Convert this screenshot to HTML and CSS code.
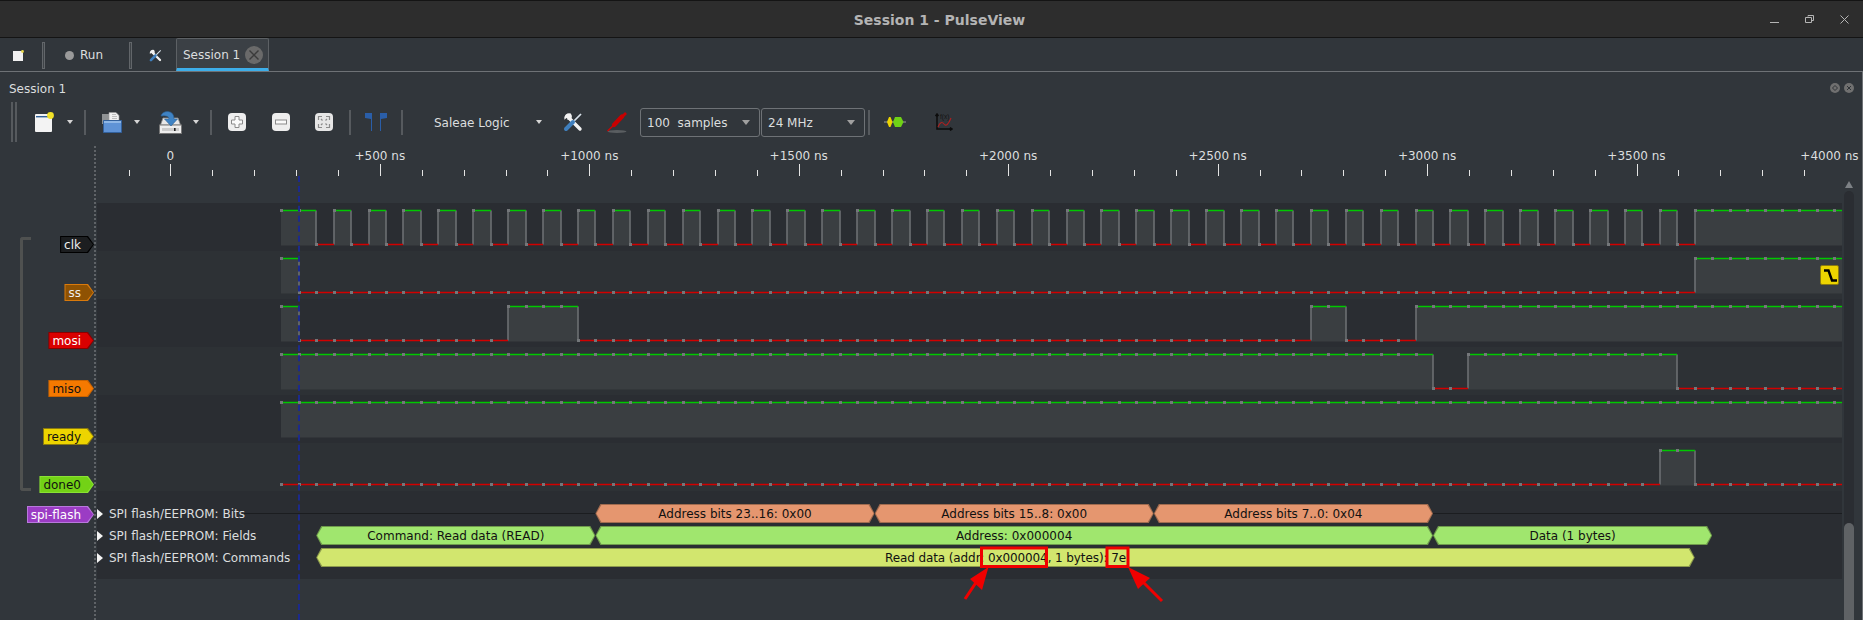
FILE: index.html
```html
<!DOCTYPE html>
<html lang="en">
<head>
  <meta charset="UTF-8">
  <title>Session 1 - PulseView</title>
  <link rel="stylesheet" href="styles.css">
</head>
<body>
  <svg class="defs" width="0" height="0">
    <symbol id="tools" viewBox="0 0 20 20">
      <path d="M4 4 L17 17" stroke="#f2f2f2" stroke-width="3.4" stroke-linecap="round"/>
      <path d="M7.8 1.6 A5 5 0 0 0 1.4 7.8 L4 5.4 L5.8 6 L6.4 3.8 Z M4 7.6 A5 5 0 0 0 8.6 6.2 A5 5 0 0 0 7.8 1.6 L5 4.4 L5.6 6 Z" fill="#f2f2f2"/>
      <path d="M18 2 L9.5 10.5" stroke="#d9e3ec" stroke-width="1.7"/>
      <path d="M10 10 L3 17" stroke="#3f7fbd" stroke-width="4" stroke-linecap="round"/>
    </symbol>
  </svg>

  <header class="titlebar">
    <span class="window-title">Session 1 - PulseView</span>
    <div class="window-buttons">
      <svg width="9" height="8" viewBox="0 0 9 8"><path d="M0 7.5 H9" stroke="#b5b5b5"/></svg>
      <svg width="9" height="8" viewBox="0 0 9 8"><path d="M3 1.5 V0.5 H8.5 V5.5 H6.5 M0.5 2.5 H6.5 V7.5 H0.5 Z" stroke="#b5b5b5" fill="none"/></svg>
      <svg width="9" height="9" viewBox="0 0 9 9"><path d="M0.5 0.5 L8.5 8.5 M8.5 0.5 L0.5 8.5" stroke="#b5b5b5"/></svg>
    </div>
  </header>

  <nav class="tabbar">
    <svg class="tab-stop" width="11" height="11" viewBox="0 0 11 11">
      <rect y="1" width="10" height="10" fill="#f1f1f1"/>
      <circle cx="9.5" cy="1.5" r="1.4" fill="#e8d84a"/>
    </svg>
    <span class="tab-sep tab-sep-first"></span>
    <span class="run-dot"></span>
    <span class="run-label">Run</span>
    <span class="tab-sep tab-sep-second"></span>
    <svg class="tab-tools" width="13" height="13"><use href="#tools"/></svg>
    <div class="tab">
      <span>Session 1</span>
      <svg class="tab-close" width="18" height="18" viewBox="0 0 18 18">
        <circle cx="9" cy="9" r="9" fill="#6a6a6a"/>
        <path d="M4.5 4.5 L13.5 13.5 M13.5 4.5 L4.5 13.5" stroke="#3b3b3b" stroke-width="1.4"/>
      </svg>
    </div>
  </nav>

  <main class="panel">
    <div class="dock-title">
      <span>Session 1</span>
      <div class="dock-buttons">
        <svg width="10" height="10" viewBox="0 0 10 10"><circle cx="5" cy="5" r="5" fill="#707070"/><path d="M5 2.5 L7.5 5 L5 7.5 L2.5 5 Z" fill="none" stroke="#2f3337"/></svg>
        <svg width="10" height="10" viewBox="0 0 10 10"><circle cx="5" cy="5" r="5" fill="#707070"/><path d="M3 3 L7 7 M7 3 L3 7" stroke="#2f3337"/></svg>
      </div>
    </div>

    <div class="toolbar">
      <span class="handle"></span>

      <button class="tool ml10">
        <svg width="20" height="20" viewBox="0 0 20 20">
          <rect x="1" y="2" width="17" height="18" rx="1" fill="#f3f3f3"/>
          <rect x="2" y="4" width="15" height="1.4" fill="#2f5f96"/>
          <circle cx="16.5" cy="3.5" r="3.4" fill="#f2e228"/>
        </svg>
      </button>
      <span class="drop"></span>
      <span class="sep ml4"></span>

      <button class="tool ml8">
        <svg width="21" height="21" viewBox="0 0 21 21">
          <path d="M1 2 H8 V12 H1 Z" fill="#8f9294"/>
          <path d="M8 0.5 H15 L18 3.5 V11 H8 Z" fill="#f0f0f0" stroke="#9a9a9a" stroke-width="0.6"/>
          <path d="M11 2.5 H15 M11 4.5 H16 M11 6.5 H16" stroke="#a8a8a8" stroke-width="0.7"/>
          <path d="M2.5 8.5 H20.5 V20.5 H2.5 Z" fill="#5f93d6" stroke="#33619c"/>
          <path d="M3 9 H20 V11 H3 Z" fill="#8fb7e6"/>
        </svg>
      </button>
      <span class="drop"></span>

      <button class="tool ml6">
        <svg width="23" height="23" viewBox="0 0 23 23">
          <path d="M4 7 H19 L21.5 14 H1.5 Z" fill="#e8e8e8" stroke="#8a8a8a" stroke-width="0.8"/>
          <rect x="0.5" y="14" width="22" height="8.5" fill="#eeeeee" stroke="#777"/>
          <rect x="3" y="17" width="17" height="3" fill="#cccccc"/>
          <rect x="15" y="17" width="1.6" height="3" fill="#222"/>
          <path d="M2 5 Q3 0.5 9 0.5 Q15 1 15 8 H18.5 L12 15 L5.5 8 H10 Q10 4 2 5 Z" fill="#3f83c4" stroke="#2a5f96" stroke-width="0.6"/>
        </svg>
      </button>
      <span class="drop"></span>
      <span class="sep ml4"></span>

      <button class="tool ml8">
        <svg width="18" height="18" viewBox="0 0 18 18">
          <rect width="18" height="18" rx="4" fill="#eeeeee"/>
          <path d="M7 3.5 H11 V7 H14.5 V11 H11 V14.5 H7 V11 H3.5 V7 H7 Z" fill="#fafafa" stroke="#8a8a8a"/>
        </svg>
      </button>
      <button class="tool ml10">
        <svg width="18" height="18" viewBox="0 0 18 18">
          <rect width="18" height="18" rx="4" fill="#eeeeee"/>
          <rect x="3.5" y="7" width="11" height="4" fill="#fafafa" stroke="#8a8a8a"/>
        </svg>
      </button>
      <button class="tool ml9">
        <svg width="18" height="18" viewBox="0 0 18 18">
          <rect width="18" height="18" rx="4" fill="#e6e6e6"/>
          <path d="M3.5 7 V3.5 H7 M11 3.5 H14.5 V7 M14.5 11 V14.5 H11 M7 14.5 H3.5 V11 M6 6 L7.5 7.5 M12 6 L10.5 7.5 M12 12 L10.5 10.5 M6 12 L7.5 10.5" fill="none" stroke="#8a8a8a" stroke-width="1.2"/>
        </svg>
      </button>
      <span class="sep ml8"></span>

      <button class="tool ml8">
        <svg width="22" height="18" viewBox="0 0 22 18">
          <path d="M0 0 H7 V18 H6 V6 L0 5 Z" fill="#2a5ea8"/>
          <path d="M22 0 H15 V18 H16 V6 L22 5 Z" fill="#2a5ea8"/>
        </svg>
      </button>
      <span class="sep ml8"></span>

      <div class="device">
        <span>Saleae Logic</span>
        <span class="drop"></span>
      </div>

      <button class="tool ml5">
        <svg width="20" height="20"><use href="#tools"/></svg>
      </button>
      <button class="tool ml10">
        <svg width="20" height="21" viewBox="0 0 20 21">
          <ellipse cx="10" cy="19.5" rx="9.5" ry="1.4" fill="#77797b" opacity="0.6"/>
          <path d="M0.5 19 L8 12" stroke="#d00000" stroke-width="1.3"/>
          <path d="M7 13 L15 4.5" stroke="#c80000" stroke-width="4.4" stroke-linecap="round"/>
          <path d="M15 5 L19 1" stroke="#c80000" stroke-width="2.6"/>
        </svg>
      </button>

      <div class="combo ml6 combo-samples"><span>100&nbsp; samples</span><span class="drop"></span></div>
      <div class="combo ml1 combo-rate"><span>24 MHz</span><span class="drop"></span></div>
      <span class="sep sep-wide ml3"></span>

      <button class="tool ml8">
        <svg width="22" height="10" viewBox="0 0 22 10">
          <path d="M0 5 H22" stroke="#9a9a9a"/>
          <path d="M3 5 L5 0 H6.5 L8.5 5 L6.5 10 H5 Z" fill="#edd400"/>
          <path d="M9 5 L11 0 H17 L19.5 5 L17 10 H11 Z" fill="#6fd216"/>
        </svg>
      </button>
      <button class="tool ml15">
        <svg width="18" height="18" viewBox="0 0 18 18">
          <path d="M2 1 V16 H17 M0.5 3 L2 1 L3.5 3 M15 14.5 L17 16 L15 17.5" fill="none" stroke="#0c0c0c" stroke-width="1.5"/>
          <path d="M3 14 Q6 7 9 11 T16 5" fill="none" stroke="#b02020" stroke-width="1.1"/>
          <text x="5" y="6" class="math-text">f(x)</text>
        </svg>
      </button>
    </div>

    <section class="view">
      <div class="ruler">
        <div class="ruler-labels">
          <span>0</span>
          <span>+500 ns</span>
          <span>+1000 ns</span>
          <span>+1500 ns</span>
          <span>+2000 ns</span>
          <span>+2500 ns</span>
          <span>+3000 ns</span>
          <span>+3500 ns</span>
          <span class="ruler-end">+4000 ns</span>
        </div>
        <svg id="ticks" class="ruler-ticks" width="1863" height="12"></svg>
      </div>

      <div class="view-body">
        <div class="traces">
          <div class="row dark">
            <div class="row-label"><span class="tag tag-clk"><span>clk</span></span></div>
            <svg class="wave" data-start="1" data-flips="clk" width="1745" height="48"></svg>
          </div>
          <div class="row">
            <div class="row-label"><span class="tag tag-ss"><span>ss</span></span></div>
            <div class="wave-box">
              <svg class="wave" data-start="1" data-flips="1,81" width="1745" height="48"></svg>
              <div class="trigger">
                <svg width="15" height="15" viewBox="0 0 15 15"><path d="M1 2.5 H5.5 L9 12.5 H14" fill="none" stroke="#000" stroke-width="2.4"/></svg>
              </div>
            </div>
          </div>
          <div class="row dark">
            <div class="row-label"><span class="tag tag-mosi"><span>mosi</span></span></div>
            <svg class="wave" data-start="1" data-flips="1,13,17,59,61,65" width="1745" height="48"></svg>
          </div>
          <div class="row">
            <div class="row-label"><span class="tag tag-miso"><span>miso</span></span></div>
            <svg class="wave" data-start="1" data-flips="66,68,80" width="1745" height="48"></svg>
          </div>
          <div class="row dark">
            <div class="row-label"><span class="tag tag-ready"><span>ready</span></span></div>
            <svg class="wave" data-start="1" data-flips="" width="1745" height="48"></svg>
          </div>
          <div class="row">
            <div class="row-label"><span class="tag tag-done"><span>done0</span></span></div>
            <svg class="wave" data-start="0" data-flips="79,81" width="1745" height="48"></svg>
          </div>

          <div class="decoder">
            <div class="decoder-label"><span class="tag tag-spi"><span>spi-flash</span></span></div>
            <div class="decoder-rows">
              <div class="dec-row dec-bits">
                <span class="dec-expand"></span>SPI flash/EEPROM: Bits
                <div class="ann ann-bits" data-from="18" data-to="34"><span>Address bits 23..16: 0x00</span></div>
                <div class="ann ann-bits" data-from="34" data-to="50"><span>Address bits 15..8: 0x00</span></div>
                <div class="ann ann-bits" data-from="50" data-to="66"><span>Address bits 7..0: 0x04</span></div>
              </div>
              <div class="dec-row">
                <span class="dec-expand"></span>SPI flash/EEPROM: Fields
                <div class="ann ann-fields" data-from="2" data-to="18"><span>Command: Read data (READ)</span></div>
                <div class="ann ann-fields" data-from="18" data-to="66"><span>Address: 0x000004</span></div>
                <div class="ann ann-fields" data-from="66" data-to="82"><span>Data (1 bytes)</span></div>
              </div>
              <div class="dec-row">
                <span class="dec-expand"></span>SPI flash/EEPROM: Commands
                <div class="ann ann-commands" data-from="2" data-to="81"><span>Read data (addr: 0x000004, 1 bytes): 7e</span></div>
              </div>
            </div>
          </div>
        </div>

        <div class="scrollbar">
          <span class="scroll-up"></span>
          <div class="scroll-track"><div class="scroll-thumb"></div></div>
        </div>
      </div>

      <span class="header-dots"></span>
      <span class="cursor-line"></span>
      <span class="group-bracket"></span>
    </section>
  </main>

  <svg class="callouts" width="1863" height="620" viewBox="0 0 1863 620">
    <rect x="981.5" y="548" width="65" height="18.5" fill="none" stroke="#f00000" stroke-width="3"/>
    <rect x="1107" y="548" width="21" height="18.5" fill="none" stroke="#f00000" stroke-width="3"/>
    <path d="M965 599 L979 578" stroke="#f00000" stroke-width="3"/>
    <path d="M988.5 567 L970 579 L982 590 Z" fill="#f00000"/>
    <path d="M1162 601 L1143 582" stroke="#f00000" stroke-width="3"/>
    <path d="M1128 567 L1138 589 L1150 578 Z" fill="#f00000"/>
  </svg>

  <script src="trace.js"></script>
</body>
</html>
```

FILE: styles.css
```css
:root {
  --bg: #31363b;
  --row: #2d3135;
  --row-dark: #2a2d32;
  --text: #dcdedf;
  --line: #6e7276;
  --sep: #565a5e;
}

* {
  box-sizing: border-box;
}

html,
body {
  margin: 0;
  height: 620px;
  overflow: hidden;
}

body {
  position: relative;
  display: flex;
  flex-direction: column;
  background: var(--bg);
  color: var(--text);
  font: 12px/17px "DejaVu Sans", sans-serif;
}

.defs {
  position: absolute;
}

/* window title */

.titlebar {
  position: relative;
  flex: none;
  height: 38px;
  display: flex;
  align-items: center;
  justify-content: center;
  padding: 2px 0 0 16px;
  background: #2d2d2d;
  border-top: 1px solid #141414;
  border-bottom: 1px solid #141414;
}

.window-title {
  font-size: 14px;
  font-weight: bold;
  color: #b4b4b4;
}

.window-buttons {
  position: absolute;
  right: 14px;
  top: 14px;
  display: flex;
  gap: 26px;
}

/* tabs */

.tabbar {
  flex: none;
  height: 34px;
  padding-top: 1px;
  display: flex;
  align-items: center;
  border-bottom: 1px solid var(--line);
}

.tab-stop {
  margin-left: 13px;
}

.tab-sep {
  width: 3px;
  height: 27px;
  border: 1px solid #62666a;
  background: #3e4347;
}

.tab-sep-first {
  margin-left: 18px;
}

.run-dot {
  width: 9px;
  height: 9px;
  margin-left: 20px;
  border-radius: 50%;
  background: #9a9a9a;
}

.run-label {
  width: 42px;
  margin-left: 6px;
  padding-top: 1px;
}

.tab-sep-second {
  margin-left: 7px;
}

.tab-tools {
  margin-left: 17px;
}

.tab {
  align-self: flex-start;
  width: 93px;
  height: 33px;
  margin: -1px 0 0 14px;
  padding: 3px 6px 0 6px;
  display: flex;
  align-items: center;
  justify-content: space-between;
  background: #3b4045;
  border: 1px solid #5d6165;
  border-bottom: 3px solid #3daee9;
  border-radius: 2px 2px 0 0;
}

.tab-close {
  margin-right: -1px;
}

/* dock */

.panel {
  flex: 1;
  display: flex;
  flex-direction: column;
  border-right: 1px solid var(--line);
}

.dock-title {
  flex: none;
  height: 28px;
  padding: 9px 8px 0 9px;
  display: flex;
  justify-content: space-between;
}

.dock-buttons {
  display: flex;
  gap: 4px;
  padding-top: 2px;
}

.dock-buttons svg {
  display: block;
}

/* toolbar */

.toolbar {
  flex: none;
  height: 45px;
  padding-left: 11px;
  display: flex;
  align-items: flex-start;
}

.handle {
  width: 6px;
  height: 40px;
  margin-top: 2px;
  border-left: 2px solid var(--sep);
  border-right: 2px solid var(--sep);
}

.tool {
  width: 34px;
  height: 34px;
  margin-top: 5px;
  padding: 0;
  display: flex;
  align-items: center;
  justify-content: center;
  background: none;
  border: none;
}

.drop {
  position: relative;
  flex: none;
  width: 19px;
  height: 44px;
}

.drop::after {
  content: "";
  position: absolute;
  left: 6px;
  top: 20px;
  border-left: 3.5px solid transparent;
  border-right: 3.5px solid transparent;
  border-top: 4px solid #d5d5d5;
}

.sep {
  flex: none;
  width: 2px;
  height: 25px;
  margin-top: 10px;
  background: var(--sep);
}

.sep-wide {
  height: 25px;
}

.ml1 { margin-left: 1px; }
.ml3 { margin-left: 3px; }
.ml4 { margin-left: 4px; }
.ml5 { margin-left: 5px; }
.ml6 { margin-left: 6px; }
.ml8 { margin-left: 8px; }
.ml9 { margin-left: 9px; }
.ml10 { margin-left: 10px; }
.ml15 { margin-left: 15px; }

.device {
  width: 148px;
  height: 44px;
  padding: 0 2px 0 31px;
  display: flex;
  justify-content: space-between;
  line-height: 46px;
}

.combo {
  height: 29px;
  margin-top: 8px;
  padding-left: 6px;
  display: flex;
  justify-content: space-between;
  line-height: 29px;
  border: 1px solid var(--line);
  border-radius: 3px;
}

.combo .drop {
  width: 14px;
  height: 27px;
  margin-right: 3px;
}

.combo .drop::after {
  left: 0;
  top: 11px;
  border-left-width: 4px;
  border-right-width: 4px;
  border-top: 5px solid #a0a0a0;
}

.combo-samples {
  width: 120px;
}

.combo-rate {
  width: 104px;
}

.math-text {
  font-size: 6.5px;
  fill: #141414;
}

/* time ruler */

.view {
  position: relative;
  flex: 1;
  min-height: 0;
}

.ruler {
  height: 31px;
}

.ruler-labels {
  height: 19px;
  padding: 3px 0 0 65.7px;
  display: flex;
}

.ruler-labels span {
  flex: none;
  width: 209.44px;
  text-align: center;
}

.ruler-labels .ruler-end {
  width: 176.6px;
}

.ruler-ticks {
  display: block;
}

/* traces */

.view-body {
  display: flex;
}

.traces {
  flex: none;
  width: 1842px;
  padding-top: 27px;
}

.row {
  display: flex;
  height: 48px;
  --row-bg: var(--row);
}

.row.dark {
  --row-bg: var(--row-dark);
}

.row-label {
  flex: none;
  width: 97px;
  padding-right: 3px;
  display: flex;
  justify-content: flex-end;
  align-items: flex-end;
}

.wave,
.wave-box {
  flex: none;
  display: block;
  background: var(--row-bg);
}

.wave-box {
  position: relative;
  width: 1745px;
  height: 48px;
}

.trigger {
  position: absolute;
  left: 1723px;
  top: 14px;
  width: 19px;
  height: 20px;
  padding: 2px;
  background: #edd400;
  border: 1px solid #8a7a10;
  border-radius: 2px;
}

.trigger svg {
  display: block;
}

.tag {
  position: relative;
  height: 17px;
  margin-bottom: -2px;
  padding: 0 13px 0 4px;
  line-height: 19px;
  background: var(--tag-edge);
  color: var(--tag-text);
  clip-path: polygon(0 0, calc(100% - 6px) 0, 100% 50%, calc(100% - 6px) 100%, 0 100%);
}

.tag::before {
  content: "";
  position: absolute;
  inset: 1px;
  background: var(--tag-fill);
  clip-path: polygon(0 0, calc(100% - 6px) 0, 100% 50%, calc(100% - 6px) 100%, 0 100%);
}

.tag span {
  position: relative;
}

.tag-clk { --tag-edge: #000; --tag-fill: #1c1e20; --tag-text: #eee; }
.tag-ss { --tag-edge: #d97a0c; --tag-fill: #8f5202; --tag-text: #eee; }
.tag-mosi { --tag-edge: #8a0000; --tag-fill: #d90000; --tag-text: #fff; }
.tag-miso { --tag-edge: #c96300; --tag-fill: #f57900; --tag-text: #111; }
.tag-ready { --tag-edge: #8a7a10; --tag-fill: #edd400; --tag-text: #111; }
.tag-done { --tag-edge: #8ae234; --tag-fill: #73d216; --tag-text: #111; }
.tag-spi { --tag-edge: #b878dc; --tag-fill: #9b3cc4; --tag-text: #fff; }

/* decoder */

.decoder {
  display: flex;
  height: 88px;
}

.decoder-label {
  flex: none;
  width: 97px;
  padding: 15px 3px 0 0;
  display: flex;
  justify-content: flex-end;
  align-items: flex-start;
}

.decoder-rows {
  flex: none;
  width: 1745px;
  padding-top: 11px;
  background: var(--row-dark);
}

.dec-row {
  position: relative;
  height: 22px;
  display: flex;
  align-items: center;
  padding-top: 3px;
}

.dec-bits::before {
  content: "";
  position: absolute;
  left: 147px;
  right: 0;
  top: 11px;
  height: 1px;
  background: #1b1d20;
}

.dec-expand {
  width: 0;
  height: 0;
  margin: -2px 6px 0 0;
  border-top: 5px solid transparent;
  border-bottom: 5px solid transparent;
  border-left: 6px solid #f4f4f4;
}

.ann {
  position: absolute;
  top: 2px;
  height: 19px;
  padding-top: 2px;
  display: flex;
  align-items: center;
  justify-content: center;
  color: #111;
  background: var(--ann-edge);
  clip-path: polygon(0 50%, 5px 0, calc(100% - 5px) 0, 100% 50%, calc(100% - 5px) 100%, 5px 100%);
}

.ann::before {
  content: "";
  position: absolute;
  inset: 1px;
  background: var(--ann-fill);
  clip-path: polygon(0 50%, 5px 0, calc(100% - 5px) 0, 100% 50%, calc(100% - 5px) 100%, 5px 100%);
}

.ann span {
  position: relative;
}

.ann-bits { --ann-edge: #a06b4f; --ann-fill: #e5966f; }
.ann-fields { --ann-edge: #6f9a4c; --ann-fill: #a0e66e; }
.ann-commands { --ann-edge: #8c9a4c; --ann-fill: #d2e66e; letter-spacing: -0.1px; }

/* scrollbar */

.scrollbar {
  flex: none;
  width: 10px;
  margin-left: 2px;
  padding-top: 5px;
  display: flex;
  flex-direction: column;
  align-items: center;
  height: 444px;
}

.scroll-up {
  flex: none;
  border-left: 4px solid transparent;
  border-right: 4px solid transparent;
  border-bottom: 7px solid #7d8185;
}

.scroll-track {
  flex: 1;
  width: 10px;
  margin-top: 3px;
  padding-top: 332px;
  display: flex;
  background: #2a2d32;
  border-radius: 5px 5px 0 0;
}

.scroll-thumb {
  width: 10px;
  background: #5f6265;
  border-radius: 5px 5px 0 0;
}

/* overlays */

.header-dots {
  position: absolute;
  left: 94px;
  top: 1px;
  bottom: 0;
  border-left: 2px dotted #5f6367;
}

.cursor-line {
  position: absolute;
  left: 298px;
  top: 31px;
  bottom: 0;
  border-left: 2px dashed #1c2a8c;
}

.group-bracket {
  position: absolute;
  left: 20px;
  top: 92px;
  width: 11px;
  height: 254px;
  border: 3px solid #4f5150;
  border-right: none;
  border-radius: 3px 0 0 3px;
}

.callouts {
  position: absolute;
  left: 0;
  top: 0;
  pointer-events: none;
}
```

FILE: trace.js
```js
// one sample at 24 MHz is 17.45px at this zoom
const firstSample = 184.3;
const step = 17.45;
const highY = 7.5;
const lowY = 41.5;
const sampleCount = 90;

function sampleX(i) {
  return Math.round(firstSample + i * step);
}

function buildWave(svg) {
  let flips;
  if (svg.dataset.flips === 'clk') {
    flips = [];
    for (let i = 2; i <= 81; i++) flips.push(i);
  } else {
    flips = svg.dataset.flips ? svg.dataset.flips.split(',').map(Number) : [];
  }

  let value = parseInt(svg.dataset.start);
  let from = 0;
  let fill = '';
  let high = '';
  let low = '';
  let edges = '';
  let dots = '';
  const rowEnd = 1745;

  const points = flips.concat([null]);
  points.forEach((flip) => {
    const x1 = sampleX(from);
    const x2 = flip === null ? rowEnd : sampleX(flip);
    if (value) {
      fill += `<rect x="${x1}" y="${highY}" width="${x2 - x1}" height="${lowY - highY + 1}" fill="#3a3e41"/>`;
      high += `M${x1} ${highY}H${x2}`;
    } else {
      low += `M${x1} ${lowY}H${x2}`;
    }
    if (flip !== null) {
      edges += `M${x2} ${highY}V${lowY}`;
      value = value ? 0 : 1;
      from = flip;
    }
  });

  let v = parseInt(svg.dataset.start);
  for (let i = 0; i < sampleCount; i++) {
    if (flips.includes(i)) v = v ? 0 : 1;
    const y = v ? highY : lowY;
    dots += `<rect x="${sampleX(i) - 1}" y="${y - 1.5}" width="3" height="3" fill="#74777a"/>`;
  }

  svg.innerHTML = fill +
    `<path d="${edges}" stroke="#6c6f72" stroke-width="1.6" fill="none"/>` +
    `<path d="${high}" stroke="#00c800" stroke-width="1.5" fill="none"/>` +
    `<path d="${low}" stroke="#d20000" stroke-width="1.5" fill="none"/>` +
    dots;
}

function buildTicks(svg) {
  let lines = '';
  for (let i = 0; i <= 40; i++) {
    const x = Math.round(128.5 + i * 41.89) + 0.5;
    const top = (i - 1) % 5 === 0 ? 0 : 6;
    lines += `<path d="M${x} ${top}V12" stroke="#e4e4e4"/>`;
  }
  svg.innerHTML = lines;
}

document.querySelectorAll('.wave').forEach(buildWave);
buildTicks(document.getElementById('ticks'));

document.querySelectorAll('.ann').forEach((ann) => {
  const left = firstSample + ann.dataset.from * step;
  const right = firstSample + ann.dataset.to * step;
  ann.style.left = left + 'px';
  ann.style.width = (right - left) + 'px';
});
```
